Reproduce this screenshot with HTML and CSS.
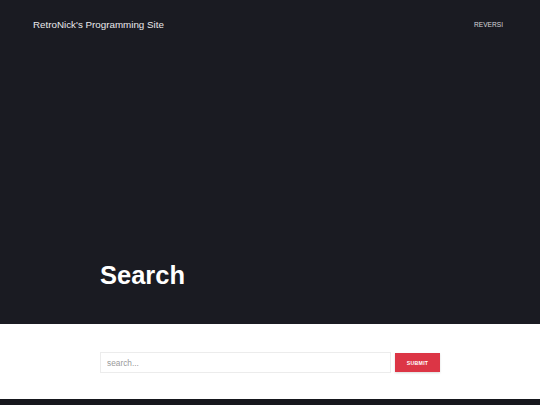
FILE: index.html
```html
<!DOCTYPE html>
<html lang="en">
<head>
<meta charset="utf-8">
<title>Search - RetroNick's Programming Site</title>
<link rel="stylesheet" href="styles.css">
</head>
<body>
<header class="hero">
  <nav class="nav">
    <a class="brand" href="#">RetroNick's Programming Site</a>
    <a class="nav-link" href="#">Reversi</a>
  </nav>
  <div class="hero-body">
    <div class="container">
      <h1 class="page-title">Search</h1>
    </div>
  </div>
</header>
<section class="search-section">
  <div class="container">
    <form class="search-form">
      <input class="search-input" type="text" placeholder="search...">
      <button class="search-button" type="submit">Submit</button>
    </form>
  </div>
</section>
<footer class="footer"></footer>
</body>
</html>
```
FILE: styles.css
```css
html, body {
  margin: 0;
  padding: 0;
}
body {
  font-family: "Liberation Sans", Arial, sans-serif;
  background: #16171d;
  color: #fff;
}
.hero {
  background: #1a1b22;
  height: 324px;
  display: flex;
  flex-direction: column;
}
.nav {
  display: flex;
  justify-content: space-between;
  align-items: center;
  height: 48px;
  padding: 0 37px 0 33px;
}
.brand {
  color: #e9e9ec;
  text-decoration: none;
  font-size: 9.8px;
}
.nav-link {
  color: #d8d8dc;
  text-decoration: none;
  text-transform: uppercase;
  font-size: 6.6px;
}
.hero-body {
  flex: 1;
  display: flex;
  align-items: flex-end;
  padding-bottom: 34px;
}
.container {
  width: 340px;
  margin: 0 auto;
}
.page-title {
  margin: 0;
  font-size: 25.5px;
  line-height: 29px;
  font-weight: 700;
  color: #fff;
}
.search-section {
  background: #fff;
  height: 75px;
  box-sizing: border-box;
  padding-top: 28px;
}
.search-form {
  display: flex;
  align-items: center;
  gap: 4px;
  margin: 0;
}
.search-input {
  flex: 1;
  height: 21px;
  box-sizing: border-box;
  border: 1px solid #ececec;
  padding: 0 6px;
  font-family: "Liberation Sans", Arial, sans-serif;
  font-size: 8.3px;
  color: #555;
  outline: none;
  margin: 0;
}
.search-input::placeholder {
  color: #9a9a9a;
}
.search-button {
  width: 45px;
  height: 19px;
  border: none;
  background: #dc3545;
  color: #fff;
  font-family: "Liberation Sans", Arial, sans-serif;
  font-weight: 700;
  font-size: 5.2px;
  letter-spacing: 0.3px;
  text-transform: uppercase;
  box-shadow: 0 1px 2px rgba(0,0,0,0.15);
  padding: 0;
  margin: 0;
}
.footer {
  background: #16171d;
  height: 6px;
}
```
